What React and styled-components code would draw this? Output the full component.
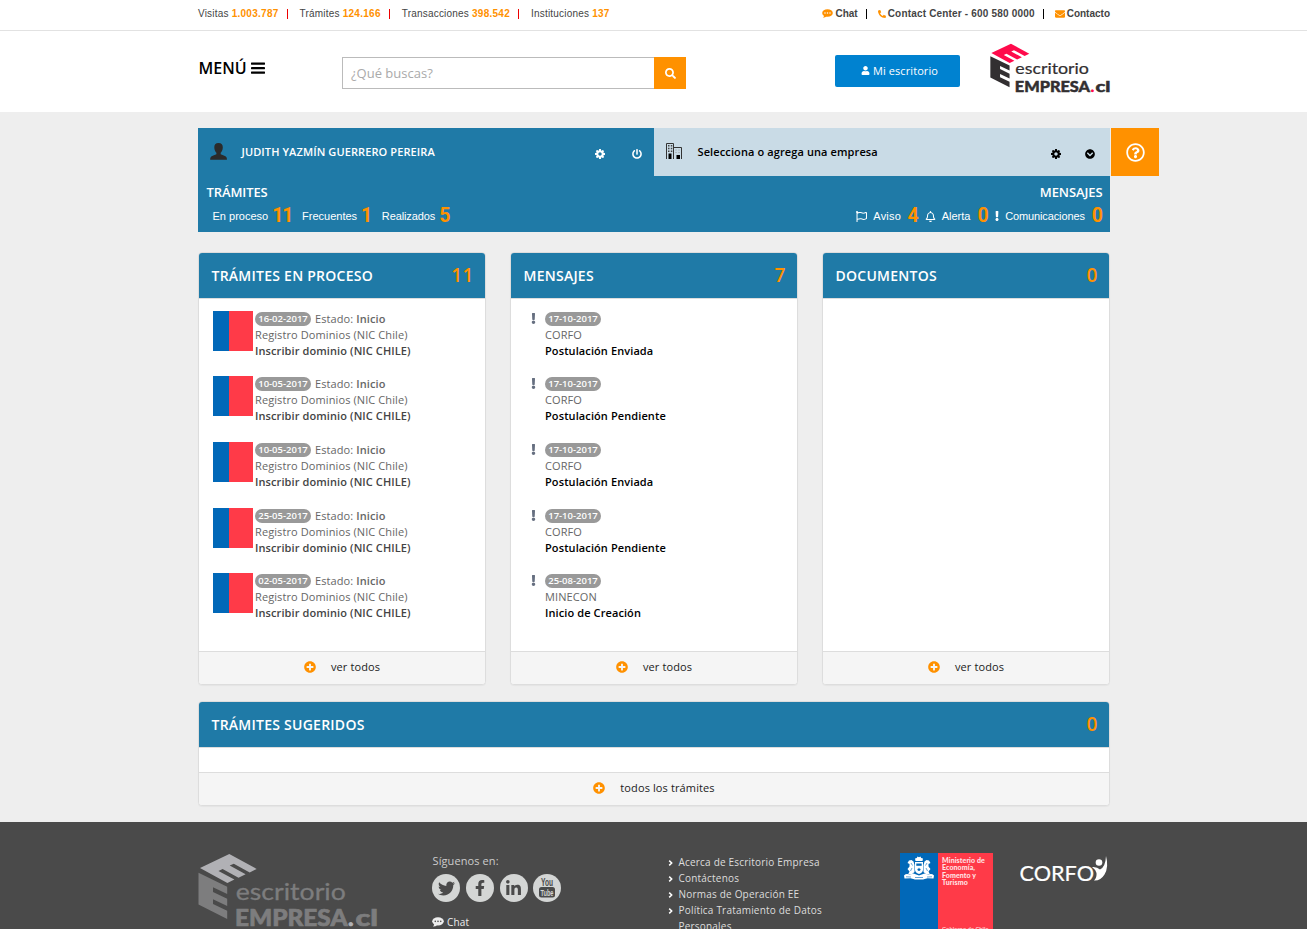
import React from 'react';
import styled, { createGlobalStyle } from 'styled-components';
import {
  FaSearch, FaUser, FaPhoneAlt, FaEnvelope, FaPowerOff, FaChevronCircleDown,
  FaRegQuestionCircle, FaRegFlag, FaRegBell, FaExclamation, FaPlusCircle,
  FaTwitter, FaFacebookF, FaLinkedinIn,
} from 'react-icons/fa';

const Global = createGlobalStyle`
  * { box-sizing: border-box; }
  html, body { margin: 0; padding: 0; }
  body { background: #eee; font-family: "Open Sans", sans-serif; font-size: 11px; color: #666; }
  ul { list-style: none; margin: 0; padding: 0; }
  svg { display: block; flex: none; }
`;

const orange = '#ff9100';
const blue = '#1f7aa7';

const Page = styled.div`
  height: 929px;
  overflow: hidden;
  background: #eee;
`;

const Wrap = styled.div`
  width: 912px;
  margin-left: 198px;
  display: flex;
  & > * { flex-shrink: 0; }
`;

const TopBar = styled.div`
  height: 31px;
  background: #fff;
  border-bottom: 1px solid #e2e2e2;
  font-family: "Liberation Sans", sans-serif;
  font-size: 10px;
  line-height: 28px;
  color: #444;
`;

const TopWrap = styled(Wrap)`
  justify-content: space-between;
`;

const TopGroup = styled.div`
  display: flex;
  align-items: center;
  height: 28px;
`;

const Stat = styled.span`
  letter-spacing: 0.2px;
  white-space: pre;
  b { color: ${orange}; letter-spacing: 0.27px; }
`;

const Bar = styled.i`
  width: 1px;
  height: 10px;
  background: ${(p) => p.$color};
  margin: 0 ${(p) => p.$r}px 0 ${(p) => p.$l}px;
`;

const Contact = styled.span`
  display: flex;
  align-items: center;
  gap: 2px;
  font-weight: bold;
  white-space: nowrap;
  letter-spacing: ${(p) => p.$ls || '0'};
  svg { color: ${orange}; }
`;

const Header = styled.header`
  height: 81px;
  background: #fff;
`;

const MenuButton = styled.div`
  display: flex;
  align-items: center;
  gap: 4px;
  width: 144px;
  height: 20px;
  margin-top: 27px;
  padding-left: 0.6px;
  color: #000;
  font-size: 16px;
  font-weight: 600;
`;

const Search = styled.div`
  display: flex;
  width: 344px;
  height: 32px;
  margin-top: 26px;
`;

const SearchField = styled.div`
  flex: 1;
  border: 1px solid #bbb;
  border-right: 0;
  padding-left: 8px;
  font-size: 13px;
  line-height: 30px;
  color: #aaa;
`;

const SearchButton = styled.div`
  width: 32px;
  background: ${orange};
  color: #fff;
  display: grid;
  place-items: center;
`;

const DeskButton = styled.div`
  width: 125px;
  height: 32px;
  margin: 24px 0 0 149px;
  padding: 0 0 1px 4px;
  background: #0082d0;
  color: #fff;
  border-radius: 2px;
  display: flex;
  align-items: center;
  justify-content: center;
  gap: 3px;
  letter-spacing: 0.08px;
`;

const HeaderLogo = styled.div`
  margin: 12.4px 0 0 30.3px;
`;

const UserRow = styled.div`
  display: grid;
  grid-template-columns: 456px 456px 49px;
  width: 961px;
  margin: 16px 0 0 198px;
`;

const Account = styled.div`
  height: 48px;
  display: flex;
  align-items: center;
  padding: 0 0 2px 12px;
  background: ${(p) => (p.$light ? '#c9dbe6' : blue)};
  color: ${(p) => (p.$light ? '#000' : '#fff')};
  font-weight: 600;
`;

const AccountName = styled.span`
  flex: 1;
  padding-left: 14.5px;
  letter-spacing: 0.11px;
`;

const AccountIcons = styled.div`
  display: flex;
  align-items: center;
  gap: ${(p) => p.$gap}px;
  padding: 6px ${(p) => p.$right}px 0 0;
`;

const Help = styled.div`
  width: 48px;
  height: 48px;
  margin-left: 1px;
  background: ${orange};
  color: #fff;
  display: grid;
  place-items: center;
`;

const Summary = styled.section`
  width: 912px;
  height: 56px;
  margin-left: 198px;
  padding: 7px 7.5px 0 8.5px;
  background: ${blue};
  color: #fff;
  display: flex;
  justify-content: space-between;
`;

const SummaryTitle = styled.div`
  font-size: 13px;
  line-height: 18px;
  font-weight: 600;
  letter-spacing: -0.1px;
  text-align: ${(p) => p.$align || 'left'};
`;

const SummaryItems = styled.div`
  display: flex;
  align-items: center;
  height: 28px;
  padding: 2px ${(p) => p.$right || 0}px 0 ${(p) => p.$pad || 0}px;
  font-family: "Liberation Sans", sans-serif;
`;

const SummaryLabel = styled.span`
  margin-left: ${(p) => p.$ml || 0}px;
  letter-spacing: ${(p) => p.$ls || '0'};
`;

const SummaryCount = styled.b`
  margin: 0 0 2px ${(p) => p.$ml || 4}px;
  color: ${orange};
  font-family: Roboto, sans-serif;
  font-size: 19.5px;
  letter-spacing: -1px;
`;

const Cards = styled.div`
  display: grid;
  grid-template-columns: repeat(3, 288px);
  column-gap: 24px;
  margin: 20px 0 0 198px;
`;

const Card = styled.section`
  display: flex;
  flex-direction: column;
  height: ${(p) => p.$height}px;
  background: #fff;
  border: 1px solid #ddd;
  border-radius: 4px;
  overflow: hidden;
  box-shadow: 0 1px 1px rgba(0, 0, 0, 0.04);
`;

const CardHead = styled.div`
  height: 46px;
  flex: none;
  display: flex;
  align-items: center;
  justify-content: space-between;
  padding: 0 11.5px 0 12.5px;
  background: ${blue};
  border-bottom: 1px solid #ddd;
  color: #fff;
  font-size: 14px;
  font-weight: 600;
  letter-spacing: 0.25px;
`;

const CardCount = styled.span`
  margin-bottom: 2px;
  color: ${orange};
  font-size: 19px;
`;

const CardBody = styled.div`
  flex: 1;
  padding: 11.8px 0 0 14px;
`;

const CardFoot = styled.div`
  height: 33px;
  flex: none;
  display: flex;
  align-items: center;
  justify-content: center;
  gap: 15px;
  padding-bottom: 2px;
  background: #f5f5f5;
  border-top: 1px solid #ddd;
  color: #222;
  letter-spacing: 0.12px;
  svg { color: ${orange}; }
  span { margin-bottom: 2px; }
`;

const Item = styled.div`
  display: flex;
  height: 48px;
  margin-bottom: 17.6px;
  line-height: 16px;
  white-space: nowrap;
`;

const Flag = styled.div`
  width: 40px;
  height: 40px;
  margin-right: 2px;
  background: linear-gradient(90deg, #0168b8 16px, #ff3a48 16px);
`;

const Mark = styled.div`
  width: 20px;
  padding: 2px 0 0 2.5px;
  color: #666f80;
`;

const Line = styled.div`
  height: 16px;
  display: flex;
  align-items: center;
  letter-spacing: 0.1px;
`;

const Strong = styled(Line)`
  font-weight: 600;
  color: ${(p) => p.$color};
`;

const Badge = styled.span`
  width: 56px;
  height: 14px;
  margin-right: 4px;
  border-radius: 7px;
  background: #999;
  color: #fff;
  font-size: 9.5px;
  line-height: 14px;
  font-weight: 600;
  letter-spacing: 0;
  text-align: center;
`;

const Semi = styled.span`
  font-weight: 600;
  padding-left: 3px;
`;

const Suggested = styled.div`
  width: 912px;
  margin: 16px 0 0 198px;
`;

const Footer = styled.footer`
  height: 107px;
  margin-top: 16px;
  background: #4a4a4a;
  overflow: hidden;
  color: #ddd;
`;

const FooterLogo = styled.div`
  width: 234px;
  padding-top: 31px;
`;

const Social = styled.div`
  width: 236px;
  padding-top: 31px;
`;

const SocialTitle = styled.div`
  padding-left: 0.5px;
  line-height: 16px;
  letter-spacing: 0.1px;
  color: #ccc;
`;

const SocialRow = styled.div`
  display: flex;
  gap: 5.8px;
  margin-top: 5px;
`;

const Round = styled.span`
  width: 28px;
  height: 28px;
  border-radius: 50%;
  background: #d4d6d5;
  color: #4a4a4a;
  display: grid;
  place-items: center;
`;

const ChatLine = styled.div`
  display: flex;
  align-items: center;
  gap: 3px;
  margin-top: 12px;
  height: 16px;
  font-size: 10px;
  letter-spacing: 0.2px;
  color: #eee;
`;

const Links = styled.ul`
  width: 232px;
  padding-top: 32px;
`;

const LinkItem = styled.li`
  display: flex;
  gap: 4.5px;
  width: 175px;
  font-size: 10px;
  line-height: 16px;
  letter-spacing: 0.2px;
  svg { margin-top: 6px; color: #fff; }
`;

const Ministry = styled.div`
  display: flex;
  width: 93px;
  height: 76px;
  margin-top: 31px;
`;

const MinistryBlue = styled.div`
  width: 38px;
  padding: 3px 0 0 4px;
  background: #0168b8;
`;

const MinistryRed = styled.div`
  flex: 1;
  padding: 3.5px 0 0 4px;
  background: #ff3a48;
  color: #ffe3e5;
  font-family: Lato, sans-serif;
  font-weight: 900;
  font-size: 7px;
  line-height: 7.5px;
  letter-spacing: 0.1px;
  white-space: nowrap;
`;

const MinistrySub = styled.div`
  margin-top: 38px;
  font-size: 5.6px;
  opacity: 0.8;
`;

const Corfo = styled.div`
  margin: 33px 0 0 27px;
`;

const Gear = ({ size }) => (
  <svg width={size} height={size} viewBox="128 128 1536 1536" fill="currentColor">
    <path d="M1152 896q0-106-75-181t-181-75-181 75-75 181 75 181 181 75 181-75 75-181zm512-109v222q0 12-8 23t-20 13l-185 28q-19 54-39 91 35 50 107 138 10 12 10 25t-9 23q-27 37-99 108t-94 71q-12 0-26-9l-138-108q-44 23-91 38-16 136-29 186-7 28-36 28h-222q-14 0-24.500-8.500t-11.500-21.500l-28-184q-49-16-90-37l-141 107q-10 9-25 9-14 0-25-11-126-114-165-168-7-10-7-23 0-12 8-23 15-21 51-66.500t54-70.500q-27-50-41-99l-183-27q-13-2-21-12.500t-8-23.500v-222q0-12 8-23t19-13l186-28q14-46 39-92-40-57-107-138-10-12-10-24 0-10 9-23 26-36 98.500-107.500t94.500-71.500q13 0 26 10l138 107q44-23 91-38 16-136 29-186 7-28 36-28h222q14 0 24.500 8.500t11.500 21.500l28 184q49 16 90 37l142-107q9-9 24-9 13 0 25 10 129 119 165 170 7 8 7 22 0 12-8 23-15 21-51 66.500t-54 70.500q26 50 41 98l183 28q13 2 21 12.500t8 23.500z" />
  </svg>
);

const MenuBars = () => (
  <svg width="14" height="12" viewBox="0 0 14 12" fill="currentColor">
    <rect y="0.500" width="14" height="2.200" rx=".4" />
    <rect y="5" width="14" height="2.200" rx=".4" />
    <rect y="9.500" width="14" height="2.200" rx=".4" />
  </svg>
);

const Arrow = () => (
  <svg width="6" height="6" viewBox="0 0 6 6" fill="none" stroke="currentColor" strokeWidth="1.500">
    <path d="M1.200 .6 L3.700 3 L1.200 5.400" />
  </svg>
);

const ChatIcon = ({ dots = '#fff', w = 11 }) => (
  <svg width={w} height={w * 0.82} viewBox="0 0 11 9" fill="currentColor">
    <ellipse cx="5.500" cy="4" rx="5.300" ry="3.800" />
    <path d="M2 6 Q2.200 8 .8 8.800 Q3.500 8.800 5 7Z" />
    <g fill={dots}>
      <circle cx="3" cy="4" r=".75" /><circle cx="5.500" cy="4" r=".75" /><circle cx="8" cy="4" r=".75" />
    </g>
  </svg>
);

const PersonIcon = () => (
  <svg width="17" height="17" viewBox="0 0 17 17" fill="#2b2b2b">
    <path d="M8.500 0c3 0 4.500 1.800 4.300 4.700-.2 2.400-1.100 4-2.100 5v1.600c2.200 1 5.500 1.700 6 3.400.2.700.2 1.600.2 2H.200c0-.4 0-1.300.2-2 .5-1.700 3.800-2.400 6-3.400V9.700c-1-1-1.900-2.600-2.100-5C4.100 1.800 5.500 0 8.500 0z" />
  </svg>
);

const BuildingIcon = () => (
  <svg width="17" height="17" viewBox="0 0 17 17">
    <path d="M.5 16V.5h7V16M7.500 4.500h8V16" fill="none" stroke="#333" />
    <path d="M2 2h1.500v1.500H2zM4.800 2h1.500v1.500H4.800zM2 4.700h1.500v1.500H2zM4.800 4.700h1.500v1.500H4.800zM2 7.400h1.500v1.500H2zM4.800 7.400h1.500v1.500H4.800z" fill="#444" />
    <path d="M2.500 10.500h3v5.500h-3zM10.500 12h3.500v4h-3.500z" fill="#000" />
    <path d="M9.500 7h1M12.500 7h1M9.500 9.500h1M12.500 9.500h1" stroke="#999" />
  </svg>
);

const BrandLogo = ({ width, top, side, text, dot }) => (
  <svg width={width} height={(width * 80) / 180} viewBox="0 0 180 80">
    <path fill={top} d="M31.300 1 L58.700 16 L51.700 19.400 L35.800 10.700 L31.700 12.600 L47.600 21.300 L40.500 24.700 L24.600 16 L20.500 17.900 L36.400 26.600 L29.400 30 L2 15Z" />
    <path fill={side} d="M0.500 19.700 L29.200 33.700 V41 L15 34.200 V39 L29.200 45.800 V53 L15 46.200 V51 L29.200 57.800 V66 L0.500 51.500Z" />
    <g fontFamily="Lato" fill={text} stroke={text}>
      <text x="37.800" y="47" fontSize="23" strokeWidth=".3" textLength="110" lengthAdjust="spacingAndGlyphs">escritorio</text>
      <g fontWeight="900" fontSize="23.500" strokeWidth=".7">
        <text x="37" y="72.500" textLength="112.500" lengthAdjust="spacingAndGlyphs">EMPRESA</text>
        <text x="150" y="72.500" fill={dot} stroke={dot}>.</text>
        <text x="157.500" y="72.500" textLength="22.500" lengthAdjust="spacingAndGlyphs">cl</text>
      </g>
    </g>
  </svg>
);

const YouTube = () => (
  <svg width="28" height="28" viewBox="0 0 28 28">
    <text x="8" y="12" fontFamily="Liberation Sans" fontWeight="bold" fontSize="10" fill="#4a4a4a" textLength="12" lengthAdjust="spacingAndGlyphs">You</text>
    <rect x="6" y="13" width="16" height="10.500" rx="2.500" fill="#4a4a4a" />
    <text x="7.500" y="21.800" fontFamily="Liberation Sans" fontWeight="bold" fontSize="9.500" fill="#d4d6d5" textLength="13" lengthAdjust="spacingAndGlyphs">Tube</text>
  </svg>
);

const CoatOfArms = () => (
  <svg width="30" height="24" viewBox="0 0 30 24" fill="#fff">
    <path d="M11.500 5L11 2.500 12.800 2 13.500.5 15 1.200 16.500.5l.7 1.500 1.800.5-.5 2.500z" />
    <path d="M11 6h8v7.500q0 3-4 4.500-4-1.500-4-4.500z" />
    <path d="M3.500 7L5 4.500 7.500 4 9.500 5.500 10.500 9v7l-3 2.500H4l1.500-3-2-2.500 2-2.500L5.500 8z" />
    <path d="M26.500 7L25 4.500 22.500 4l-2 1.500-1 3.500v7l3 2.500H26l-1.500-3 2-2.500-2-2.500V8z" />
    <path d="M0 19.500q2.500-2.500 5.500-.8l4-1.200 5.500 2 5.500-2 4 1.200q3-1.700 5.500.8l-.5 3-6-.3-4.500 1.300h-8l-4.500-1.300-6 .3z" />
    <path d="M12.300 7.500h5.400v2.300h-5.400z" fill="#0168b8" />
    <path d="M15 11.500l.6 1.300 1.400.1-1 1 .3 1.400-1.300-.7-1.300.7.3-1.400-1-1 1.400-.1z" fill="#0168b8" />
    <path d="M2 20.800l5 .2M23 21l5-.2M11 21.500h8M7 7l1.500 2.500M8 12l-1.500 3M23 7l-1.500 2.500M22 12l1.500 3" stroke="#0168b8" strokeWidth=".6" />
  </svg>
);

const CorfoLogo = () => (
  <svg width="90" height="32" viewBox="0 0 90 32" fill="#fff">
    <text x="-0.500" y="25.500" fontFamily="Lato" fontSize="22" stroke="#fff" strokeWidth=".2" textLength="74.500" lengthAdjust="spacingAndGlyphs">CORFO</text>
    <circle cx="79" cy="7.500" r="3.300" />
    <path d="M86 1Q89 12 84.500 19.500Q80.500 26 74 25.500Q77 23 76.500 18Q75 14 72 12Q77 11.500 80 14.500Q85.500 12 86 1Z" />
  </svg>
);

const procedures = ['16-02-2017', '10-05-2017', '10-05-2017', '25-05-2017', '02-05-2017'];
const messages = [
  ['17-10-2017', 'CORFO', 'Postulación Enviada'],
  ['17-10-2017', 'CORFO', 'Postulación Pendiente'],
  ['17-10-2017', 'CORFO', 'Postulación Enviada'],
  ['17-10-2017', 'CORFO', 'Postulación Pendiente'],
  ['25-08-2017', 'MINECON', 'Inicio de Creación'],
];
const links = ['Acerca de Escritorio Empresa', 'Contáctenos', 'Normas de Operación EE', 'Política Tratamiento de Datos Personales'];

const Panel = ({ title, count, footer, height, children }) => (
  <Card $height={height}>
    <CardHead><span>{title}</span><CardCount>{count}</CardCount></CardHead>
    <CardBody>{children}</CardBody>
    <CardFoot><FaPlusCircle size={12} /><span>{footer}</span></CardFoot>
  </Card>
);

export default function App() {
  return (
    <Page>
      <Global />
      <TopBar>
        <TopWrap>
          <TopGroup>
            <Stat>Visitas <b>1.003.787</b></Stat><Bar $color="#e00" $l={8} $r={12} />
            <Stat>Trámites <b>124.166</b></Stat><Bar $color="#e00" $l={8} $r={12} />
            <Stat>Transacciones <b>398.542</b></Stat><Bar $color="#e00" $l={8} $r={12} />
            <Stat>Instituciones <b>137</b></Stat>
          </TopGroup>
          <TopGroup>
            <Contact><ChatIcon />Chat</Contact><Bar $color="#000" $l={8} $r={11} />
            <Contact $ls="0.18px"><FaPhoneAlt size={8} />Contact Center - 600 580 0000</Contact><Bar $color="#000" $l={8} $r={11} />
            <Contact><FaEnvelope size={10} />Contacto</Contact>
          </TopGroup>
        </TopWrap>
      </TopBar>

      <Header>
        <Wrap>
          <MenuButton>MENÚ <MenuBars /></MenuButton>
          <Search>
            <SearchField>¿Qué buscas?</SearchField>
            <SearchButton><FaSearch size={11} /></SearchButton>
          </Search>
          <DeskButton><FaUser size={9} /><span>Mi escritorio</span></DeskButton>
          <HeaderLogo>
            <BrandLogo width={120.5} top="#ff0a4b" side="#322f31" text="#322f31" dot="#ff0a4b" />
          </HeaderLogo>
        </Wrap>
      </Header>

      <UserRow>
        <Account>
          <PersonIcon />
          <AccountName>JUDITH YAZMÍN GUERRERO PEREIRA</AccountName>
          <AccountIcons $gap={27} $right={12}><Gear size={10} /><FaPowerOff size={10} /></AccountIcons>
        </Account>
        <Account $light>
          <BuildingIcon />
          <AccountName>Selecciona o agrega una empresa</AccountName>
          <AccountIcons $gap={24.5} $right={15}><Gear size={10} /><FaChevronCircleDown size={10} /></AccountIcons>
        </Account>
        <Help><FaRegQuestionCircle size={19} /></Help>
      </UserRow>
      <Summary>
        <div>
          <SummaryTitle>TRÁMITES</SummaryTitle>
          <SummaryItems $pad={6}>
            <SummaryLabel>En proceso</SummaryLabel><SummaryCount>11</SummaryCount>
            <SummaryLabel $ml={9.5}>Frecuentes</SummaryLabel><SummaryCount>1</SummaryCount>
            <SummaryLabel $ml={10.5} $ls="-0.1px">Realizados</SummaryLabel><SummaryCount>5</SummaryCount>
          </SummaryItems>
        </div>
        <div>
          <SummaryTitle $align="right">MENSAJES</SummaryTitle>
          <SummaryItems $right={0.5}>
            <FaRegFlag size={11} /><SummaryLabel $ml={6} $ls="0.2px">Aviso</SummaryLabel><SummaryCount $ml={6.5}>4</SummaryCount>
            <SummaryLabel $ml={7.5}><FaRegBell size={11} /></SummaryLabel><SummaryLabel $ml={5.5}>Alerta</SummaryLabel><SummaryCount $ml={7}>0</SummaryCount>
            <SummaryLabel $ml={4}><FaExclamation size={10} /></SummaryLabel><SummaryLabel $ml={3.5} $ls="-0.12px">Comunicaciones</SummaryLabel><SummaryCount $ml={7}>0</SummaryCount>
          </SummaryItems>
        </div>
      </Summary>

      <Cards>
        <Panel title="TRÁMITES EN PROCESO" count="11" footer="ver todos" height={433}>
          {procedures.map((date, i) => (
            <Item key={i}>
              <Flag />
              <div>
                <Line><Badge>{date}</Badge>Estado: <Semi>Inicio</Semi></Line>
                <Line>Registro Dominios (NIC Chile)</Line>
                <Strong $color="#444">Inscribir dominio (NIC CHILE)</Strong>
              </div>
            </Item>
          ))}
        </Panel>
        <Panel title="MENSAJES" count="7" footer="ver todos" height={433}>
          {messages.map(([date, org, title], i) => (
            <Item key={i}>
              <Mark><FaExclamation size={11} /></Mark>
              <div>
                <Line><Badge>{date}</Badge></Line>
                <Line>{org}</Line>
                <Strong $color="#000">{title}</Strong>
              </div>
            </Item>
          ))}
        </Panel>
        <Panel title="DOCUMENTOS" count="0" footer="ver todos" height={433} />
      </Cards>

      <Suggested>
        <Panel title="TRÁMITES SUGERIDOS" count="0" footer="todos los trámites" height={105} />
      </Suggested>

      <Footer>
        <Wrap>
          <FooterLogo>
            <BrandLogo width={180} top="#b1b1b5" side="#7d7d7e" text="#7d7d7e" dot="#b1b1b5" />
          </FooterLogo>
          <Social>
            <SocialTitle>Síguenos en:</SocialTitle>
            <SocialRow>
              <Round><FaTwitter size={17} /></Round>
              <Round><FaFacebookF size={16} /></Round>
              <Round><FaLinkedinIn size={17} /></Round>
              <Round><YouTube /></Round>
            </SocialRow>
            <ChatLine><ChatIcon w={12} dots="#4a4a4a" />Chat</ChatLine>
          </Social>
          <Links>
            {links.map((label) => (
              <LinkItem key={label}><Arrow /><span>{label}</span></LinkItem>
            ))}
          </Links>
          <Ministry>
            <MinistryBlue><CoatOfArms /></MinistryBlue>
            <MinistryRed>
              Ministerio de<br />Economía,<br />Fomento y<br />Turismo
              <MinistrySub>Gobierno de Chile</MinistrySub>
            </MinistryRed>
          </Ministry>
          <Corfo><CorfoLogo /></Corfo>
        </Wrap>
      </Footer>
    </Page>
  );
}
